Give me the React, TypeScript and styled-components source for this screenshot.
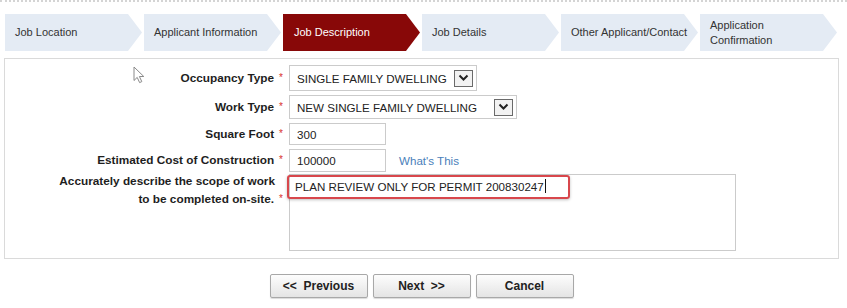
import React from 'react'
import styled, { createGlobalStyle } from 'styled-components'

const GlobalStyle = createGlobalStyle`
  html, body {
    margin: 0;
    padding: 0;
    background: #ffffff;
  }
  body {
    font-family: 'Liberation Sans', Arial, sans-serif;
    color: #222;
  }
`

const Page = styled.div`
  width: 847px;
  height: 308px;
  box-sizing: border-box;
  padding: 0 8px 0 4px;
  border-top: 2px dotted #d4d4d4;
  overflow: hidden;
`

const Steps = styled.div`
  display: flex;
  gap: 2px;
  margin: 12px 0 0 1px;
`

const Step = styled.div<{ $active?: boolean }>`
  width: 137px;
  height: 37px;
  box-sizing: border-box;
  padding: 0 6px 0 ${(p) => (p.$active ? 11 : 10)}px;
  display: flex;
  align-items: center;
  font-size: 11px;
  line-height: 15px;
  white-space: pre-line;
  color: ${(p) => (p.$active ? '#ffffff' : '#333333')};
  background: ${(p) => (p.$active ? '#880808' : '#e4ebf4')};
  clip-path: polygon(0 0, calc(100% - 14px) 0, 100% 50%, calc(100% - 14px) 100%, 0 100%);
`

const Panel = styled.div`
  position: relative;
  width: 835px;
  height: 201px;
  box-sizing: border-box;
  margin-top: 7px;
  border: 1px solid #dadada;
  padding: 6px 0 0 0;
`

const Form = styled.div`
  display: flex;
  flex-direction: column;
  gap: 4px;
`

const Row = styled.div<{ $top?: boolean }>`
  display: grid;
  grid-template-columns: 278px auto;
  column-gap: 6px;
  align-items: ${(p) => (p.$top ? 'start' : 'center')};
  margin-top: ${(p) => (p.$top ? -2 : 0)}px;
`

const Field = styled.div`
  display: flex;
  align-items: center;
  gap: 13px;
`

const Label = styled.div<{ $lift?: boolean }>`
  text-align: right;
  font-size: 11.8px;
  font-weight: bold;
  line-height: 18px;
  color: #1e1e1e;
  margin-top: ${(p) => (p.$lift ? -2 : 0)}px;
`

const LabelLine = styled.span`
  padding-right: 8px;
`

const Req = styled.span`
  color: #d8302c;
  font-size: 10px;
  font-weight: normal;
  margin-left: 5px;
  position: relative;
  top: -1px;
`

const SelectBox = styled.div<{ $w: number; $h: number }>`
  width: ${(p) => p.$w}px;
  height: ${(p) => p.$h}px;
  box-sizing: border-box;
  border: 1px solid #cbcbcb;
  background: #fff;
  display: flex;
  align-items: center;
  padding: 0 3px 0 7px;
  font-size: 11.6px;
  color: #222;
  white-space: nowrap;
`

const ArrowBox = styled.span`
  margin-left: auto;
  width: 19px;
  height: 17px;
  box-sizing: border-box;
  border: 1px solid #6a6a6a;
  background: #f2f2f2;
  display: flex;
  align-items: center;
  justify-content: center;
`

const TextInput = styled.input<{ $h: number }>`
  width: 97px;
  height: ${(p) => p.$h}px;
  box-sizing: border-box;
  border: 1px solid #cbcbcb;
  padding: 0 7px;
  font-family: inherit;
  font-size: 11.6px;
  color: #222;
  outline: none;
`

const HelpLink = styled.a`
  font-size: 11.6px;
  color: #4a80ba;
  text-decoration: none;
`

const TextArea = styled.div`
  position: relative;
  width: 447px;
  height: 77px;
  box-sizing: border-box;
  border: 1px solid #cbcbcb;
  padding: 4px 5px;
  font-size: 11.6px;
  line-height: 15px;
  color: #222;
`

const Caret = styled.span`
  display: inline-block;
  width: 1px;
  height: 14px;
  background: #111;
  vertical-align: -2px;
  margin-left: 1px;
`

const Highlight = styled.div`
  position: absolute;
  left: -3px;
  top: 0px;
  width: 283px;
  height: 24px;
  box-sizing: border-box;
  border: 2px solid #d8474c;
  border-radius: 3px;
  box-shadow: 0 1px 3px rgba(0, 0, 0, 0.25);
`

const Pointer = styled.svg`
  position: absolute;
  left: 128px;
  top: 7px;
`

const Buttons = styled.div`
  width: 835px;
  display: flex;
  justify-content: center;
  gap: 5px;
  margin-top: 15px;
`

const Button = styled.button`
  width: 98px;
  height: 24px;
  border: 1px solid #a8a8a8;
  border-radius: 2px;
  background: linear-gradient(#fdfdfd, #e4e4e4);
  box-shadow: 0 1px 1px rgba(0, 0, 0, 0.15);
  font-family: inherit;
  font-size: 12px;
  font-weight: bold;
  color: #222;
  white-space: pre;
  padding: 0;
`

const Chevron = () => (
  <svg width="11" height="8" viewBox="0 0 11 8">
    <path d="M1.5 1.5 L5.5 5.5 L9.5 1.5" fill="none" stroke="#222" strokeWidth="2" />
  </svg>
)

const steps = [
  'Job Location',
  'Applicant Information',
  'Job Description',
  'Job Details',
  'Other Applicant/Contact',
  'Application\nConfirmation',
]

const App = () => {
  return (
    <>
      <GlobalStyle />
      <Page>
        <Steps>
          {steps.map((s, i) => (
            <Step key={s} $active={i === 2}>
              {s}
            </Step>
          ))}
        </Steps>
        <Panel>
          <Pointer width="14" height="18" viewBox="0 0 14 18">
            <path
              d="M1 1 L1 14.5 L4.2 11.4 L6.6 16.6 L8.8 15.6 L6.4 10.5 L10.8 10.5 Z"
              fill="#fff"
              stroke="#8a8a8a"
              strokeWidth="1"
              strokeLinejoin="round"
            />
          </Pointer>
          <Form>
            <Row>
              <Label>
                Occupancy Type<Req>*</Req>
              </Label>
              <SelectBox $w={188} $h={26}>
                SINGLE FAMILY DWELLING
                <ArrowBox>
                  <Chevron />
                </ArrowBox>
              </SelectBox>
            </Row>
            <Row>
              <Label>
                Work Type<Req>*</Req>
              </Label>
              <SelectBox $w={228} $h={24}>
                NEW SINGLE FAMILY DWELLING
                <ArrowBox>
                  <Chevron />
                </ArrowBox>
              </SelectBox>
            </Row>
            <Row>
              <Label>
                Square Foot<Req>*</Req>
              </Label>
              <TextInput readOnly value="300" $h={22} />
            </Row>
            <Row>
              <Label>
                Estimated Cost of Construction<Req>*</Req>
              </Label>
              <Field>
                <TextInput readOnly value="100000" $h={23} />
                <HelpLink href="#">What's This</HelpLink>
              </Field>
            </Row>
            <Row $top>
              <Label $lift>
                <LabelLine>Accurately describe the scope of work</LabelLine>
                <br />
                to be completed on-site.<Req>*</Req>
              </Label>
              <TextArea>
                PLAN REVIEW ONLY FOR PERMIT 200830247
                <Caret />
                <Highlight />
              </TextArea>
            </Row>
          </Form>
        </Panel>
        <Buttons>
          <Button>{'<<  Previous'}</Button>
          <Button>{'Next  >>'}</Button>
          <Button>Cancel</Button>
        </Buttons>
      </Page>
    </>
  )
}

export default App
